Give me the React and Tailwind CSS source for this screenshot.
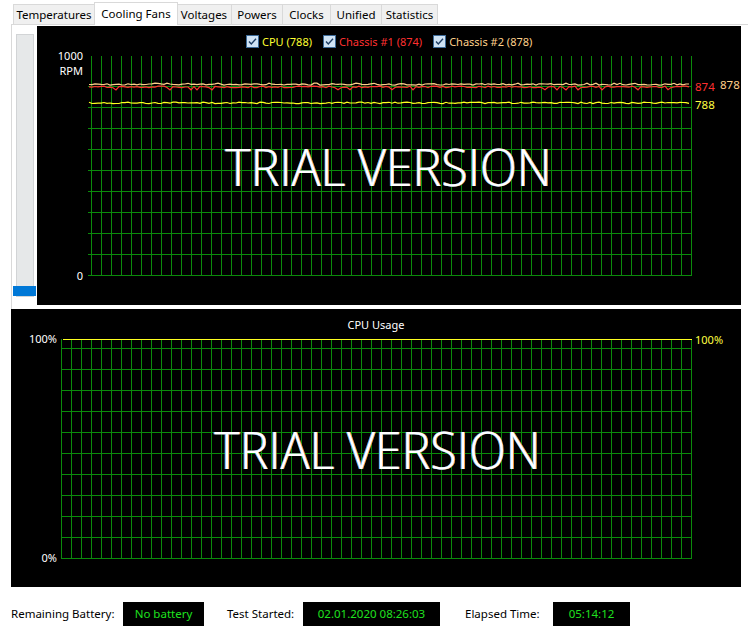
import React from "react";

const tabs = [
  { label: "Temperatures", w: "w-[82px]" },
  { label: "Cooling Fans", w: "w-[84px]", active: true },
  { label: "Voltages", w: "w-[55px]" },
  { label: "Powers", w: "w-[51px]" },
  { label: "Clocks", w: "w-[48px]" },
  { label: "Unified", w: "w-[51px]" },
  { label: "Statistics", w: "w-[56px]" },
];

// small deterministic noise so the fan curves look like the reference
const makeSeries = (seed, base, amp, spike) => {
  let s = seed;
  const pts = [];
  for (let x = 52; x <= 654; x += 3) {
    s = (s * 9301 + 49297) % 233280;
    const r = s / 233280;
    let y = base + (r - 0.5) * amp;
    if (r > 0.9) y += spike;
    pts.push(`${x},${y.toFixed(1)}`);
  }
  return pts.join(" ");
};

const beige = makeSeries(7, 58.5, 1.6, -2);
const red = makeSeries(31, 61, 1.8, 2);
const yellow = makeSeries(97, 77, 1.6, -1.5);

const GREEN = "#0b8a0b";

const Check = () => (
  <svg width="13" height="13" viewBox="0 0 13 13" className="shrink-0">
    <rect x="0.5" y="0.5" width="12" height="12" fill="#cfe3f5" stroke="#3c6a98" />
    <path d="M3 6.5 L5.3 9 L10 3.8" fill="none" stroke="#1d3d63" strokeWidth="1.4" />
  </svg>
);

const Trial = () => (
  <div className="text-white text-[52px] font-light leading-none scale-x-[0.93] whitespace-nowrap [text-shadow:-1px_0_#4aa8ff,1px_0_#ffa040]" style={{ fontFamily: '"Open Sans", "Noto Sans", sans-serif' }}>
    TRIAL VERSION
  </div>
);

const FanChart = () => {
  const hLines = Array.from({ length: 10 }, (_, k) => 249.5 - 21 * k);
  const vLines = Array.from({ length: 61 }, (_, i) => 54.5 + 10 * i);
  return (
    <div className="relative mt-[1px] h-[279px] w-[704px] bg-black">
      <svg width="704" height="279" className="absolute inset-0">
        {hLines.map((y) => (
          <line key={y} x1="51" x2="655" y1={y} y2={y} stroke={GREEN} />
        ))}
        {vLines.map((x) => (
          <line key={x} x1={x} x2={x} y1="30" y2="250" stroke={GREEN} />
        ))}
        <polyline points={beige} fill="none" stroke="#ffd08a" strokeWidth="1.2" />
        <polyline points={red} fill="none" stroke="#ff3030" strokeWidth="1.2" />
        <polyline points={yellow} fill="none" stroke="#ffff20" strokeWidth="1.2" />
        <g fontSize="11" fill="#ffffff" style={{ fontFamily: '"Noto Sans", sans-serif' }}>
          <text x="46" y="34" textAnchor="end">1000</text>
          <text x="46" y="49" textAnchor="end">RPM</text>
          <text x="46" y="254" textAnchor="end">0</text>
        </g>
        <g fontSize="11.5" style={{ fontFamily: '"Noto Sans", sans-serif' }}>
          <text x="658" y="65" fill="#ff3030">874</text>
          <text x="683" y="63" fill="#ffd08a">878</text>
          <text x="658" y="83" fill="#ffff40">788</text>
        </g>
      </svg>
      <div className="absolute left-[209px] top-[9px] flex items-center text-[11px] leading-none" style={{ fontFamily: '"Noto Sans", sans-serif' }}>
        <Check />
        <span className="ml-[3px] text-[#ffff30]">CPU (788)</span>
        <span className="ml-[11px]"><Check /></span>
        <span className="ml-[3px] text-[#ff3030]">Chassis #1 (874)</span>
        <span className="ml-[11px]"><Check /></span>
        <span className="ml-[3px] text-[#ffd08a]">Chassis #2 (878)</span>
      </div>
      <div className="absolute left-[50px] top-[30px] w-[602px] h-[219px] flex items-center justify-center">
        <Trial />
      </div>
    </div>
  );
};

const CpuChart = () => {
  const hLines = Array.from({ length: 11 }, (_, k) => 249.5 - 21 * k);
  const vLines = Array.from({ length: 64 }, (_, i) => 50.5 + 10 * i);
  return (
    <div className="relative ml-[11px] h-[278px] w-[730px] bg-black">
      <svg width="730" height="278" className="absolute inset-0">
        {hLines.map((y) => (
          <line key={y} x1="51" x2="681" y1={y} y2={y} stroke={GREEN} />
        ))}
        {vLines.map((x) => (
          <line key={x} x1={x} x2={x} y1="30" y2="250" stroke={GREEN} />
        ))}
        <line x1="52" x2="681" y1="30.5" y2="30.5" stroke="#ffff20" />
        <g fontSize="11" style={{ fontFamily: '"Noto Sans", sans-serif' }}>
          <text x="365" y="20" textAnchor="middle" fill="#ffffff">CPU Usage</text>
          <text x="46" y="34" textAnchor="end" fill="#ffffff">100%</text>
          <text x="46" y="253" textAnchor="end" fill="#ffffff">0%</text>
          <text x="684" y="35" fill="#ffff40">100%</text>
        </g>
      </svg>
      <div className="absolute left-[51px] top-[30px] w-[630px] h-[219px] flex items-center justify-center">
        <Trial />
      </div>
    </div>
  );
};

const ValueBox = ({ w, children }) => (
  <div className={`${w} h-[24px] bg-black flex items-center justify-center text-[#1fe01f] text-[11.5px]`}>
    {children}
  </div>
);

export default function App() {
  return (
    <div className="w-[748px] h-[636px] bg-white overflow-hidden text-black" style={{ fontFamily: '"Noto Sans", "Open Sans", sans-serif' }}>
      <div className="flex items-end h-[24px] pl-[13px]">
        {tabs.map((t) =>
          t.active ? (
            <div key={t.label} className={`${t.w} -mx-px -mb-px h-[23px] relative z-10 bg-white border border-b-0 border-[#d9d9d9] flex items-start justify-center pt-[2px] text-[11.5px]`}>
              {t.label}
            </div>
          ) : (
            <div key={t.label} className={`${t.w} h-[20px] bg-[#f0f0f0] border border-b-0 border-l-0 first:border-l border-[#d9d9d9] flex items-center justify-center text-[11.5px]`}>
              {t.label}
            </div>
          )
        )}
      </div>
      <div className="ml-[11px] h-[285px] border-l border-t border-[#d9d9d9] flex items-start">
        <div className="relative w-[25px] h-full">
          <div className="ml-[4px] mt-[9px] w-[18px] h-[263px] bg-[#e6e8e9] border border-[#d2d4d6]" />
          <div className="absolute left-[1px] top-[261px] w-[23px] h-[10px] bg-[#0078d7]" />
        </div>
        <FanChart />
      </div>
      <CpuChart />
      <div className="flex items-center mt-[15px] pl-[11px] text-[11.5px]">
        <span className="w-[112px]">Remaining Battery:</span>
        <ValueBox w="w-[81px]">No battery</ValueBox>
        <span className="ml-[23px] w-[76px]">Test Started:</span>
        <ValueBox w="w-[137px]">02.01.2020 08:26:03</ValueBox>
        <span className="ml-[25px] w-[88px]">Elapsed Time:</span>
        <ValueBox w="w-[77px]">05:14:12</ValueBox>
      </div>
    </div>
  );
}
